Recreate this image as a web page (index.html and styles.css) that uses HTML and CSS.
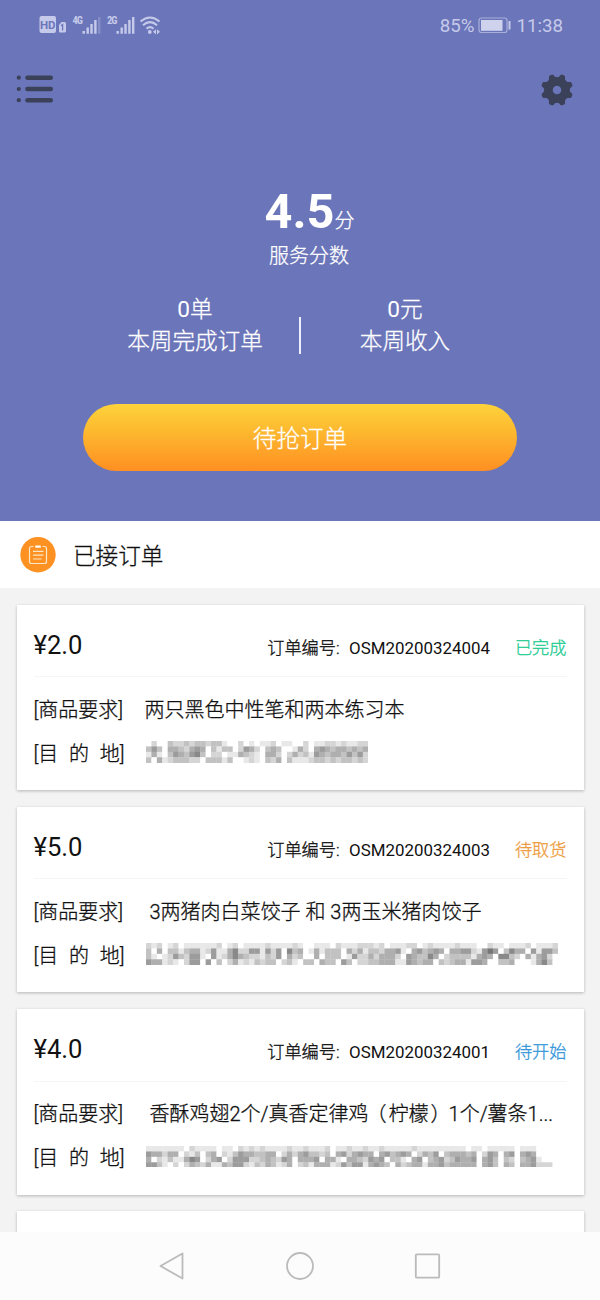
FILE: index.html
```html
<!DOCTYPE html>
<html lang="zh-CN">
<head>
<meta charset="utf-8">
<title>已接订单</title>
<link rel="stylesheet" href="styles.css">
</head>
<body>
<div class="screen">
  <header class="hero">
    <div class="status">
      <svg class="status-icons" width="124" height="22" viewBox="0 0 124 22" fill="#c6caea">
        <rect x="0.5" y="3" width="16.500" height="17" rx="2"/>
        <text class="hd" x="8.700" y="15.5" text-anchor="middle">HD</text>
        <path d="M20 12 L22.5 9H25.500Q27 9 27 10.500V18Q27 19.500 25.500 19.500H21Q20 19.500 20 18.500Z"/>
        <path d="M22 12.700l1.600-1.200v6" fill="none" stroke="#6c76ba" stroke-width="1.300"/>
        <text class="net" x="33.500" y="11">4G</text>
        <path d="M43.500 18h2.400v2.800h-2.400zM47.500 14.500h2.400v6.300h-2.400zM51.300 11h2.400v9.800h-2.400zM55.200 7h2.400v13.800h-2.400z"/>
        <path d="M59 4h2.400v16.800H59z" opacity=".3"/>
        <text class="net" x="68" y="11">2G</text>
        <path d="M77.500 18h2.400v2.800h-2.400zM81.500 14.500h2.400v6.300h-2.400zM85.300 11h2.400v9.800h-2.400zM89.200 7h2.400v13.800h-2.400zM93 4h2.400v16.800H93z"/>
        <path d="M101.500 8.500Q111 .500 120.500 8.500M104 12.300Q111 6 118 12.300M107.500 15.800Q111 12.500 114.500 15.800" fill="none" stroke="#c6caea" stroke-width="2"/>
        <circle cx="110.800" cy="19" r="1.900"/>
        <path d="M114 18.800l3-2.600v5.200zM121 18.800l-3-2.600v5.200z"/>
      </svg>
      <div class="status-right">
        <span>85%</span>
        <svg class="battery" width="34" height="17" viewBox="0 0 34 17">
          <rect x="1" y="1" width="28" height="14.500" rx="2.500" fill="none" stroke="#a9afdb" stroke-width="1.200"/>
          <rect x="3" y="3" width="21.500" height="10.800" fill="#cfd2ed"/>
          <rect x="30.500" y="4" width="2" height="8.500" fill="#c6caea"/>
        </svg>
        <span>11:38</span>
      </div>
    </div>
    <div class="toolbar">
      <svg class="menu" width="38" height="30" viewBox="0 0 38 30" fill="#3b4158">
        <circle cx="2.800" cy="3.700" r="2.100"/><circle cx="2.800" cy="15" r="2.100"/><circle cx="2.800" cy="26.200" r="2.100"/>
        <rect x="9.200" y="1.500" width="27.800" height="4.600" rx="2.300"/><rect x="9.200" y="12.700" width="27.800" height="4.600" rx="2.300"/><rect x="9.200" y="23.900" width="27.800" height="4.600" rx="2.300"/>
      </svg>
      <svg id="gear" width="32" height="32" viewBox="-16 -16 32 32"></svg>
    </div>
    <div class="score"><b>4.5</b><span>分</span></div>
    <div class="score-label">服务分数</div>
    <div class="stats">
      <div class="stat"><div><span class="num">0</span>单</div><div>本周完成订单</div></div>
      <div class="rule"></div>
      <div class="stat"><div><span class="num">0</span>元</div><div>本周收入</div></div>
    </div>
    <div class="grab">待抢订单</div>
  </header>
  <div class="section">
    <svg width="36" height="36" viewBox="0 0 36 36">
      <circle cx="18" cy="17.700" r="17.700" fill="#fd9222"/>
      <g fill="none" stroke="#fde6c6" stroke-width="1.200">
        <path d="M13.500 9.500H11.500Q9.500 9.500 9.500 11.500V24.500Q9.500 26.500 11.500 26.500H24.500Q26.500 26.500 26.500 24.500V11.500Q26.500 9.500 24.500 9.500H22.500"/>
        <path d="M13 14.400H23.500M13 18.200H23.500M13 22H21.500"/>
      </g>
      <path d="M15.300 9.600h5.500" stroke="#fff" stroke-width="2.200"/>
    </svg>
    <h1>已接订单</h1>
  </div>
  <main class="list">
    <article class="card">
      <div class="head"><span class="price">¥2.0</span><span class="number">订单编号:<span class="code">OSM20200324004</span></span><span class="state done">已完成</span></div>
      <div class="row"><span class="label">[商品要求]</span><span class="value">两只黑色中性笔和两本练习本</span></div>
      <div class="row"><span class="label spread"><i>[目</i><i>的</i><i>地]</i></span><svg class="mosaic" data-row="0"></svg></div>
    </article>
    <article class="card">
      <div class="head"><span class="price">¥5.0</span><span class="number">订单编号:<span class="code">OSM20200324003</span></span><span class="state pickup">待取货</span></div>
      <div class="row"><span class="label">[商品要求]</span><span class="value indent">3两猪肉白菜饺子 和 3两玉米猪肉饺子</span></div>
      <div class="row"><span class="label spread"><i>[目</i><i>的</i><i>地]</i></span><svg class="mosaic" data-row="1"></svg></div>
    </article>
    <article class="card">
      <div class="head"><span class="price">¥4.0</span><span class="number">订单编号:<span class="code">OSM20200324001</span></span><span class="state start">待开始</span></div>
      <div class="row"><span class="label">[商品要求]</span><span class="value indent">香酥鸡翅2个/真香定律鸡<span class="open">（</span>柠檬<span class="close">）</span>1个/薯条1...</span></div>
      <div class="row"><span class="label spread"><i>[目</i><i>的</i><i>地]</i></span><svg class="mosaic" data-row="2"></svg></div>
    </article>
    <article class="card"></article>
  </main>
  <nav class="nav">
    <svg width="28" height="30" viewBox="0 0 28 30"><path d="M24.500 2.500 2.500 15 24.500 27.500Z"/></svg>
    <svg width="28" height="30" viewBox="0 0 28 30"><circle cx="14" cy="15" r="13"/></svg>
    <svg width="28" height="30" viewBox="0 0 28 30"><rect x="1.800" y="3.300" width="23.400" height="23.400" rx="1"/></svg>
  </nav>
</div>
<script src="main.js"></script>
</body>
</html>
```
FILE: styles.css
```css
* { box-sizing: border-box; }
body { margin: 0; font-family: Roboto, "Noto Sans CJK SC", sans-serif; font-weight: 300; color: #111; -webkit-text-stroke: .3px; }
.screen { width: 600px; height: 1300px; display: flex; flex-direction: column; overflow: hidden; background: #f3f3f3; }
svg { display: block; flex: none; }

.hero { height: 521px; flex: none; background: #6b75b9; color: #fff; display: flex; flex-direction: column; }
.status { height: 52px; padding: 0 37px 0 39px; display: flex; align-items: center; justify-content: space-between; flex: none; }
.status-icons { margin-top: -4px; -webkit-text-stroke: 0; }
.hd { font: 700 11.5px Roboto, sans-serif; fill: #6c76ba; }
.net { font: 700 10.5px "Roboto Condensed", Roboto, sans-serif; letter-spacing: -1px; }
.status-right { display: flex; align-items: center; font-size: 18.7px; font-weight: 400; color: #c6caea; -webkit-text-stroke: 0; }
.battery { margin: -1px 4px 0 4px; }
.toolbar { height: 76px; padding: 0 27px 0 16px; display: flex; align-items: center; justify-content: space-between; flex: none; }
.menu { margin-top: -2px; }
.score { margin-top: 57px; padding-left: 19px; height: 54px; line-height: 54px; display: flex; justify-content: center; align-items: baseline; flex: none; }
.score b { font-size: 48.6px; font-weight: 700; -webkit-text-stroke: 0; }
.score span { font-size: 20px; }
.score-label { margin-top: 2px; padding-left: 18px; font-size: 20px; line-height: 30px; text-align: center; }
.stats { margin-top: 22px; display: flex; justify-content: center; }
.stat { width: 208px; padding-top: 1px; text-align: center; font-size: 22.6px; line-height: 31.5px; }
.rule { width: 2px; height: 37px; margin-top: 24px; background: #eceefa; }
.num { font-weight: 400; -webkit-text-stroke: 0; }
.grab { width: 434px; height: 67px; margin: 47px auto 0; padding-top: 2px; border-radius: 34px; background: linear-gradient(#fdd33b, #fdb92f 40%, #ff8f22); font-size: 23.6px; line-height: 67px; text-align: center; }

.section { height: 67px; flex: none; padding-left: 20px; display: flex; align-items: center; gap: 17px; background: #fff; }
.section h1 { margin: 4px 0 0; font-size: 22.6px; font-weight: 300; line-height: 36px; }

.list { flex: 1; min-height: 0; overflow: hidden; padding: 16.5px 16.5px 0; display: flex; flex-direction: column; gap: 16.8px; }
.card { height: 185.5px; flex: none; padding: 0 17px; background: #fff; box-shadow: 0 1px 3px rgba(0,0,0,.26); }
.head { height: 72.5px; display: flex; align-items: baseline; border-bottom: 1px solid #f5f5f5; margin-bottom: 9px; line-height: 80px; }
.price { width: 234px; font-size: 25.6px; font-weight: 400; -webkit-text-stroke: 0; }
.number { width: 248px; font-size: 17.2px; white-space: nowrap; }
.code { margin-left: 9.500px; font-weight: 400; font-size: 16.9px; -webkit-text-stroke: 0; }
.state { font-size: 17.2px; white-space: nowrap; }
.done { color: #20cb91; }
.pickup { color: #ed9a38; }
.start { color: #3295d8; }
.row { height: 44px; display: flex; align-items: center; font-size: 20px; white-space: nowrap; }
.label { width: 91px; flex: none; }
.spread { display: flex; justify-content: space-between; }
.spread i { font-style: normal; }
.value { margin-left: 20px; }
.indent { margin-left: 25px; }
.open { margin: 0 2px 0 -2px; }
.close { margin: 0 -2px 0 2px; }
.mosaic { margin-left: 21.500px; }

.nav { height: 68px; flex: none; background: #fcfcfc; display: flex; justify-content: center; align-items: center; gap: 100px; }
.nav path, .nav circle, .nav rect { fill: none; stroke: #bbb; stroke-width: 1.8; stroke-linejoin: round; }
```
FILE: main.js
```js
var NS = 'http://www.w3.org/2000/svg';
var CELL = 5.42;

// Redacted addresses: one digit per block, 0 is white and 9 the darkest.
var masks = [
  ['02003223233233100201011201100201122121122',
   '35304432454031330254203430014204543443434',
   '14103543563022011432104420242315434435352',
   '30412333220333130012103240311123323233232'],
  ['2120120111111201201111211112100111021112221201112201211112111002110111201112',
   '3040331344125114622551525063401413330424133244510453454044552157503644051553',
   '3101253255105124643221325042300403330152242444205433640233331454066320414520',
   '5441210255050302412132330231033043305302233444115434403234415540033400014630'],
  ['1111111021111011021212111121121112011211211211111211111111101101111101110000',
   '5442440213034021354433440242453323045245440453454024350344434025404504540000',
   '4021311465024502555223432540444504410443254503310450345235445045303203451000',
   '5531020243241143552132431240231444125355145430423441445344444045304304452220']
];

function block(svg, x, y, w, h, fill) {
  var r = document.createElementNS(NS, 'rect');
  r.setAttribute('x', x);
  r.setAttribute('y', y);
  r.setAttribute('width', w);
  r.setAttribute('height', h);
  r.setAttribute('fill', fill);
  svg.appendChild(r);
}

document.querySelectorAll('.mosaic').forEach(function (svg) {
  var rows = masks[+svg.dataset.row];
  svg.setAttribute('width', rows[0].length * CELL);
  svg.setAttribute('height', rows.length * CELL);
  rows.forEach(function (row, j) {
    row.split('').forEach(function (d, i) {
      var v = 255 - d * 19 - (d > 0 ? 4 : 0);
      block(svg, i * CELL, j * CELL, CELL + 0.3, CELL + 0.3, 'rgb(' + v + ',' + v + ',' + v + ')');
    });
  });
});

// Gear outline with eight rounded teeth.
var d = '';
for (var i = 0; i <= 360; i += 2) {
  var a = i * Math.PI / 180;
  var wave = Math.max(-1, Math.min(1, Math.cos(8 * (a - Math.PI / 8)) * 1.6));
  var radius = 14.5 + 1.6 * wave;
  d += (i ? 'L' : 'M') + (radius * Math.cos(a)).toFixed(2) + ' ' + (radius * Math.sin(a)).toFixed(2);
}
d += 'ZM4.300 0A4.300 4.300 0 1 0 -4.300 0A4.300 4.300 0 1 0 4.300 0Z';
var gear = document.createElementNS(NS, 'path');
gear.setAttribute('d', d);
gear.setAttribute('fill', '#3b4158');
gear.setAttribute('fill-rule', 'evenodd');
document.getElementById('gear').appendChild(gear);
```
